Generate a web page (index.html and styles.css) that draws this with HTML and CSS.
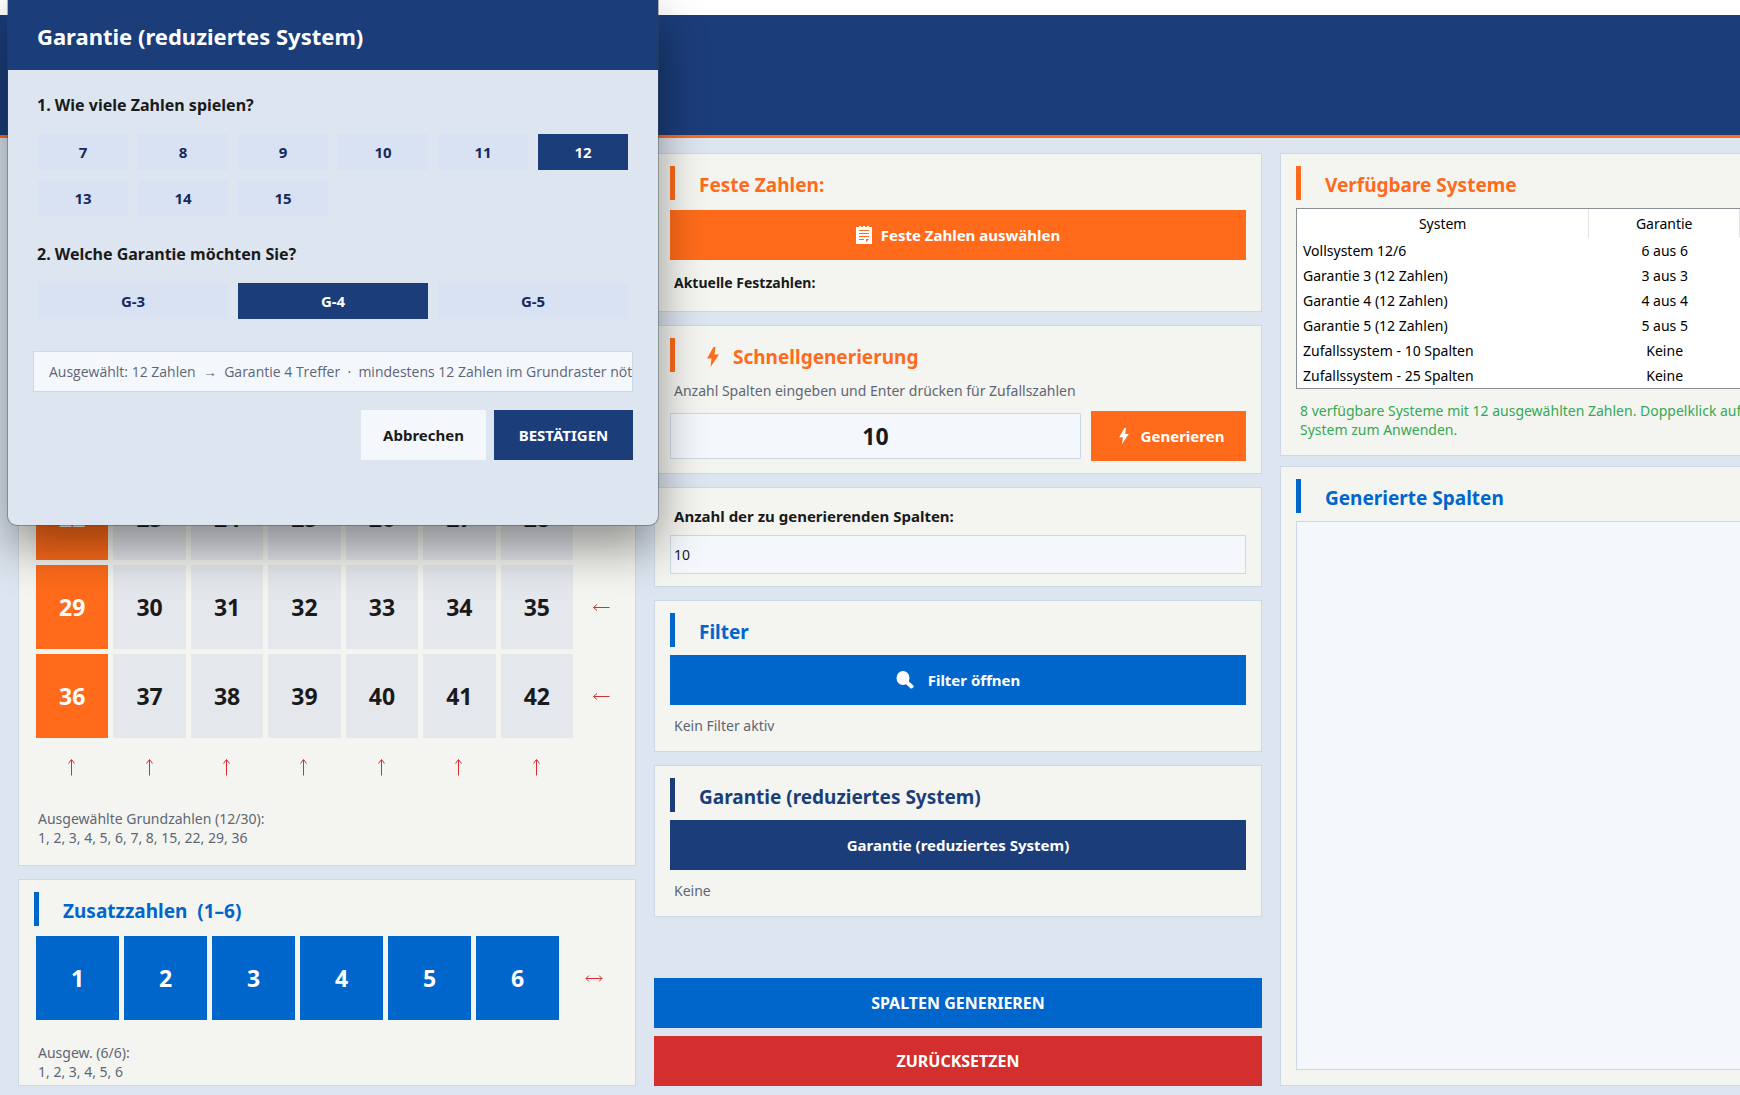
FILE: index.html
```html
<!DOCTYPE html>
<html lang="de">
<head>
<meta charset="utf-8">
<meta name="viewport" content="width=device-width, initial-scale=1">
<title>Garantie (reduziertes System)</title>
<link rel="stylesheet" href="styles.css">
</head>
<body>
<svg class="sprite" aria-hidden="true">
  <symbol id="arrow-left" viewBox="0 0 18 18"><path d="M17.500 9.500H2M5 6.500L1.500 9.500L5 12.500"/></symbol>
  <symbol id="arrow-up" viewBox="0 0 18 18"><path d="M8.500 17.500V2M5.500 5.500L8.500 1.500L11.500 5.500"/></symbol>
  <symbol id="arrow-both" viewBox="0 0 18 18"><path d="M1 9.500H17M4 6.500L1 9.500L4 12.500M14 6.500L17 9.500L14 12.500"/></symbol>
  <symbol id="bolt" viewBox="0 0 12 20"><path d="M6.500 0L0 11.500H4.500L3.500 20L12 7.500H7.500L8.500 0Z"/></symbol>
</svg>

<header class="banner"></header>

<main class="workspace">
  <div class="column">
    <section class="card card-numbers">
      <h2 class="heading blue">Grundzahlen</h2>
      <div class="numbers">
        <button class="num on">1</button><button class="num on">2</button><button class="num on">3</button><button class="num on">4</button><button class="num on">5</button><button class="num on">6</button><button class="num on">7</button><button class="arrow" aria-label="Zeile 1"><svg><use href="#arrow-left"/></svg></button>
        <button class="num on">8</button><button class="num">9</button><button class="num">10</button><button class="num">11</button><button class="num">12</button><button class="num">13</button><button class="num">14</button><button class="arrow" aria-label="Zeile 2"><svg><use href="#arrow-left"/></svg></button>
        <button class="num on">15</button><button class="num">16</button><button class="num">17</button><button class="num">18</button><button class="num">19</button><button class="num">20</button><button class="num">21</button><button class="arrow" aria-label="Zeile 3"><svg><use href="#arrow-left"/></svg></button>
        <button class="num on">22</button><button class="num">23</button><button class="num">24</button><button class="num">25</button><button class="num">26</button><button class="num">27</button><button class="num">28</button><button class="arrow" aria-label="Zeile 4"><svg><use href="#arrow-left"/></svg></button>
        <button class="num on">29</button><button class="num">30</button><button class="num">31</button><button class="num">32</button><button class="num">33</button><button class="num">34</button><button class="num">35</button><button class="arrow" aria-label="Zeile 5"><svg><use href="#arrow-left"/></svg></button>
        <button class="num on">36</button><button class="num">37</button><button class="num">38</button><button class="num">39</button><button class="num">40</button><button class="num">41</button><button class="num">42</button><button class="arrow" aria-label="Zeile 6"><svg><use href="#arrow-left"/></svg></button>
        <button class="arrow" aria-label="Spalte 1"><svg><use href="#arrow-up"/></svg></button><button class="arrow" aria-label="Spalte 2"><svg><use href="#arrow-up"/></svg></button><button class="arrow" aria-label="Spalte 3"><svg><use href="#arrow-up"/></svg></button><button class="arrow" aria-label="Spalte 4"><svg><use href="#arrow-up"/></svg></button><button class="arrow" aria-label="Spalte 5"><svg><use href="#arrow-up"/></svg></button><button class="arrow" aria-label="Spalte 6"><svg><use href="#arrow-up"/></svg></button><button class="arrow" aria-label="Spalte 7"><svg><use href="#arrow-up"/></svg></button>
      </div>
      <p class="summary">Ausgewählte Grundzahlen (12/30):<br>1, 2, 3, 4, 5, 6, 7, 8, 15, 22, 29, 36</p>
    </section>

    <section class="card card-extra">
      <h2 class="heading blue">Zusatzzahlen&nbsp; (1–6)</h2>
      <div class="extras">
        <button class="num extra">1</button><button class="num extra">2</button><button class="num extra">3</button><button class="num extra">4</button><button class="num extra">5</button><button class="num extra">6</button><button class="arrow" aria-label="Alle Zusatzzahlen"><svg><use href="#arrow-both"/></svg></button>
      </div>
      <p class="summary">Ausgew. (6/6):<br>1, 2, 3, 4, 5, 6</p>
    </section>
  </div>

  <div class="column">
    <section class="card card-fixed">
      <h2 class="heading orange">Feste Zahlen:</h2>
      <button class="btn btn-orange">
        <svg class="icon-list" viewBox="0 0 16 18"><path fill-rule="evenodd" d="M0 1H3V0H5V1H7V0H9V1H11V0H13V1H16V18H0ZM3 4V5H13V4ZM3 7V8H13V7ZM3 10V11H13V10ZM3 13V14H8V13ZM10 13V16L13 13Z"/></svg>
        Feste Zahlen auswählen
      </button>
      <p class="status strong">Aktuelle Festzahlen:</p>
    </section>

    <section class="card card-quick">
      <h2 class="heading orange"><svg class="icon-bolt-lg"><use href="#bolt"/></svg>Schnellgenerierung</h2>
      <label class="hint" for="quick">Anzahl Spalten eingeben und Enter drücken für Zufallszahlen</label>
      <div class="quick">
        <input class="field field-quick" id="quick" type="text" value="10">
        <button class="btn btn-orange btn-quick"><svg class="icon-bolt"><use href="#bolt"/></svg>Generieren</button>
      </div>
    </section>

    <section class="card">
      <label class="field-label" for="count">Anzahl der zu generierenden Spalten:</label>
      <input class="field field-count" id="count" type="text" value="10">
    </section>

    <section class="card">
      <h2 class="heading blue">Filter</h2>
      <button class="btn btn-blue">
        <svg class="icon-search" viewBox="0 0 18 18"><ellipse cx="7" cy="7" rx="6.500" ry="7"/><path d="M10 10.500L15.500 15.500" stroke-width="4" stroke-linecap="round"/></svg>
        Filter öffnen
      </button>
      <p class="status">Kein Filter aktiv</p>
    </section>

    <section class="card">
      <h2 class="heading navy">Garantie (reduziertes System)</h2>
      <button class="btn btn-navy">Garantie (reduziertes System)</button>
      <p class="status">Keine</p>
    </section>

    <div class="actions">
      <button class="btn btn-blue btn-caps">SPALTEN GENERIEREN</button>
      <button class="btn btn-red btn-caps">ZURÜCKSETZEN</button>
    </div>
  </div>

  <div class="column column-right">
    <section class="card card-systems">
      <h2 class="heading orange">Verfügbare Systeme</h2>
      <table class="systems">
        <thead><tr><th scope="col">System</th><th scope="col">Garantie</th></tr></thead>
        <tbody>
          <tr><td>Vollsystem 12/6</td><td>6 aus 6</td></tr>
          <tr><td>Garantie 3 (12 Zahlen)</td><td>3 aus 3</td></tr>
          <tr><td>Garantie 4 (12 Zahlen)</td><td>4 aus 4</td></tr>
          <tr><td>Garantie 5 (12 Zahlen)</td><td>5 aus 5</td></tr>
          <tr><td>Zufallssystem - 10 Spalten</td><td>Keine</td></tr>
          <tr><td>Zufallssystem - 25 Spalten</td><td>Keine</td></tr>
        </tbody>
      </table>
      <p class="note">8 verfügbare Systeme mit 12 ausgewählten Zahlen. Doppelklick auf<br>System zum Anwenden.</p>
    </section>

    <section class="card card-output">
      <h2 class="heading blue" id="output-title">Generierte Spalten</h2>
      <textarea class="output" aria-labelledby="output-title" readonly></textarea>
    </section>
  </div>
</main>

<div class="dialog" role="dialog" aria-labelledby="dialog-title">
  <h1 class="dialog-title" id="dialog-title">Garantie (reduziertes System)</h1>
  <div class="dialog-body">
    <h3 class="question">1. Wie viele Zahlen spielen?</h3>
    <div class="choices choices-six">
      <button class="choice">7</button><button class="choice">8</button><button class="choice">9</button><button class="choice">10</button><button class="choice">11</button><button class="choice chosen">12</button>
      <button class="choice">13</button><button class="choice">14</button><button class="choice">15</button>
    </div>
    <h3 class="question question-next">2. Welche Garantie möchten Sie?</h3>
    <div class="choices choices-three">
      <button class="choice">G-3</button><button class="choice chosen">G-4</button><button class="choice">G-5</button>
    </div>
    <p class="selection">Ausgewählt: 12 Zahlen &nbsp;→&nbsp; Garantie 4 Treffer &nbsp;·&nbsp; mindestens 12 Zahlen im Grundraster nöti</p>
    <div class="dialog-actions">
      <button class="btn btn-light">Abbrechen</button>
      <button class="btn btn-navy btn-confirm">BESTÄTIGEN</button>
    </div>
  </div>
</div>
</body>
</html>
```
FILE: styles.css
```css
:root {
  --navy: #1b3d7a;
  --blue: #0066cc;
  --orange: #ff6b1a;
  --red: #d32f2f;
  --green: #34a853;
  --page: #dde5f0;
  --card: #f4f5f0;
  --line: #ccd8e5;
  --field: #f4f8fd;
  --ink: #1a1a1a;
  --muted: #5f6575;
}

* {
  box-sizing: border-box;
}

body {
  margin: 0;
  min-height: 100vh;
  display: flex;
  flex-direction: column;
  background: var(--page);
  color: var(--ink);
  font: 14px/20px "Noto Sans", "Open Sans", sans-serif;
  position: relative;
  overflow-x: hidden;
}

h1, h2, h3, p {
  margin: 0;
}

button, input, textarea {
  font: inherit;
  color: inherit;
  border: 0;
  border-radius: 0;
  padding: 0;
  margin: 0;
}

.sprite {
  display: none;
}

.banner {
  height: 138px;
  border-top: 15px solid #fff;
  border-bottom: 3px solid var(--orange);
  background: var(--navy);
}

/* Workspace */

.workspace {
  flex: 1;
  display: grid;
  grid-template-columns: 618fr 608fr 460fr;
  gap: 18px;
  padding: 15px 0 9px 18px;
}

.column {
  display: flex;
  flex-direction: column;
  gap: 13px;
  min-width: 0;
}

.column-right {
  gap: 10px;
}

.card {
  display: flex;
  flex-direction: column;
  padding: 12px 15px;
  background: var(--card);
  border: 1px solid var(--line);
}

.column-right .card {
  padding-right: 0;
  border-right: 0;
}

.heading {
  display: flex;
  align-items: center;
  height: 34px;
  margin-bottom: 8px;
  padding: 3px 0 0 24px;
  border-left: 5px solid;
  font-size: 19px;
  font-weight: 700;
}

.blue { color: var(--blue); }
.orange { color: var(--orange); }
.navy { color: var(--navy); }

/* Number grids */

.card-numbers {
  padding: 12px 11px 18px 15px;
}

.card-extra {
  padding: 12px 11px 4px 15px;
}

.numbers, .extras {
  display: grid;
  gap: 5px;
  padding-left: 2px;
}

.numbers {
  grid-template-columns: repeat(7, 1fr) 46px;
  grid-template-rows: repeat(6, 84px) 48px;
  margin: 1px 0 18px;
}

.extras {
  grid-template-columns: repeat(6, 1fr) 60px;
  grid-template-rows: 84px;
  margin: 2px 0 23px;
}

.num {
  background: #e4e7ec;
  font-size: 23px;
  font-weight: 700;
}

.num.on {
  background: var(--orange);
  color: #fff;
}

.num.extra {
  background: var(--blue);
  color: #fff;
}

.arrow {
  display: grid;
  place-items: center;
  background: none;
}

.arrow svg {
  width: 18px;
  height: 18px;
  fill: none;
  stroke: var(--red);
}

.summary {
  padding-left: 4px;
  color: var(--muted);
  line-height: 19px;
}

/* Settings */

.btn {
  display: flex;
  align-items: center;
  justify-content: center;
  gap: 9px;
  height: 50px;
  color: #fff;
  fill: #fff;
  font-size: 15px;
  font-weight: 700;
}

.btn-orange { background: var(--orange); }
.btn-blue { background: var(--blue); }
.btn-navy { background: var(--navy); }
.btn-red { background: var(--red); }
.btn-caps { font-size: 16px; }

.card-fixed {
  padding-bottom: 18px;
}

.card-fixed .heading {
  margin-bottom: 10px;
}

.status {
  margin: 11px 0 3px;
  padding-left: 4px;
  color: var(--muted);
}

.status.strong {
  margin: 13px 0 0;
  color: var(--ink);
  font-weight: 700;
}

.icon-list {
  width: 16px;
  height: 18px;
}

.icon-bolt-lg {
  width: 12px;
  height: 20px;
  margin: 0 14px 0 8px;
  fill: currentColor;
}

.icon-bolt {
  width: 10px;
  height: 16px;
}

.icon-search {
  width: 18px;
  height: 18px;
  margin-right: 5px;
  stroke: #fff;
  stroke-width: 0;
}

.card-quick .heading {
  margin-bottom: 9px;
}

.hint {
  padding-left: 4px;
  color: var(--muted);
}

.quick {
  display: flex;
  align-items: center;
  gap: 10px;
  margin-top: 10px;
}

.field {
  width: 100%;
  background: var(--field);
  border: 1px solid var(--line);
}

.field-quick {
  flex: 1;
  min-width: 0;
  height: 46px;
  font-size: 23px;
  font-weight: 700;
  text-align: center;
}

.btn-quick {
  width: 155px;
  gap: 12px;
  padding-left: 6px;
}

.field-label {
  margin: 6px 0 9px;
  padding-left: 4px;
  font-size: 15px;
  font-weight: 700;
}

.field-count {
  height: 39px;
  padding-left: 3px;
}

.actions {
  display: grid;
  gap: 8px;
  margin-top: auto;
}

/* Systems and output */

.card-systems {
  padding-bottom: 16px;
}

.systems {
  width: 100%;
  border: 1px solid #8a8f96;
  border-right: 0;
  border-spacing: 0;
  background: #fff;
  color: #000;
  table-layout: fixed;
}

.systems th {
  height: 29px;
  padding: 0;
  font-weight: 400;
  border-right: 1px solid #e2e2e2;
}

.systems th:first-child {
  width: 66%;
}

.systems td {
  height: 25px;
  padding: 0;
  text-align: center;
}

.systems td:first-child {
  padding-left: 6px;
  text-align: left;
}

.note {
  margin-top: 12px;
  padding-left: 4px;
  color: var(--green);
  line-height: 19px;
  white-space: nowrap;
}

.card-output {
  flex: 1;
  padding-bottom: 15px;
}

.output {
  flex: 1;
  width: 100%;
  background: var(--field);
  border: 1px solid var(--line);
  border-right: 0;
  resize: none;
}

/* Guarantee dialog, a window floating over the workspace */

.dialog {
  position: absolute;
  top: 0;
  left: 8px;
  width: 650px;
  background: var(--page);
  border-radius: 0 0 9px 9px;
  box-shadow: 0 0 0 1px rgba(60, 70, 80, 0.4), 0 22px 48px rgba(0, 0, 0, 0.42);
}

.dialog-title {
  height: 70px;
  padding: 0 29px;
  background: var(--navy);
  color: #fff;
  font-size: 22px;
  line-height: 72px;
}

.dialog-body {
  padding: 25px 25px 65px;
}

.question {
  padding-left: 4px;
  font-size: 16px;
  line-height: 20px;
}

.question-next {
  margin-top: 28px;
}

.choices {
  display: grid;
  gap: 10px;
  margin-top: 19px;
  padding: 0 5px;
}

.choices-six { grid-template-columns: repeat(6, 1fr); }
.choices-three { grid-template-columns: repeat(3, 1fr); }

.choice {
  height: 36px;
  background: #d9e2f3;
  color: #152a5c;
  font-size: 15px;
  font-weight: 700;
}

.choice.chosen {
  background: var(--navy);
  color: #fff;
}

.selection {
  height: 41px;
  margin-top: 32px;
  padding-left: 15px;
  overflow: hidden;
  background: var(--field);
  border: 1px solid var(--line);
  color: var(--muted);
  font-family: "Open Sans", "Noto Sans", sans-serif;
  line-height: 39px;
  white-space: nowrap;
}

.dialog-actions {
  display: flex;
  justify-content: flex-end;
  gap: 8px;
  margin-top: 18px;
}

.btn-light {
  width: 125px;
  background: var(--field);
  color: var(--ink);
}

.btn-confirm {
  width: 139px;
}
```
